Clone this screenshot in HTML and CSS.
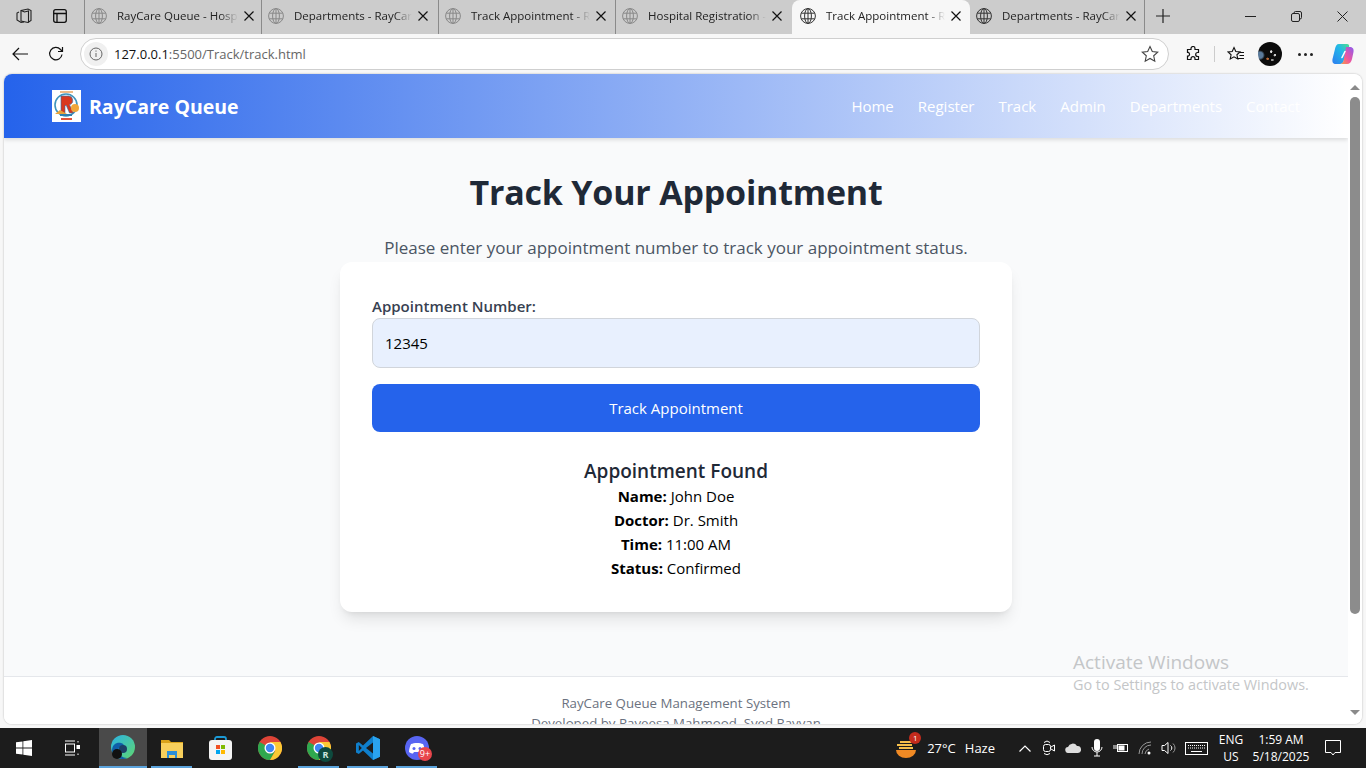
FILE: index.html
```html
<!DOCTYPE html>
<html lang="en">
<head>
  <meta charset="UTF-8">
  <title>Track Appointment - RayCare Queue</title>
  <link rel="stylesheet" href="styles.css">
</head>
<body>
  <svg width="0" height="0" class="defs">
    <symbol id="globe" viewBox="0 0 16 16"><g fill="none" stroke="currentColor" stroke-width="1"><circle cx="8" cy="8" r="7.4"/><ellipse cx="8" cy="8" rx="3.4" ry="7.4"/><path d="M8 .6v14.8M1.3 5.2h13.4M1.3 10.8h13.4"/></g></symbol>
    <symbol id="close" viewBox="0 0 10 10"><path d="M.5.5l9 9M9.5.5l-9 9" fill="none" stroke="currentColor" stroke-width="1.2"/></symbol>
    <symbol id="chrome" viewBox="0 0 24 24"><circle cx="12" cy="12" r="12" fill="#de4437"/><path d="M1.600 6 7 9l5 9 5.200-3-5.200 9A12 12 0 0 1 1.600 6z" fill="#2fa84f"/><path d="M12 6h10.400A12 12 0 0 1 12 24l5.200-9z" fill="#fcc934"/><circle cx="12" cy="12" r="5.500" fill="#fff"/><circle cx="12" cy="12" r="4.200" fill="#3f85f4"/></symbol>
  </svg>

  <!-- browser tabs -->
  <div class="tabbar">
    <div class="tab-tools">
      <svg width="18" height="18" viewBox="0 0 18 18" fill="none" stroke="#222" stroke-width="1.1"><path d="M6 3.500l7-1.500 3 1.500v10l-3 2-7-1.500z"/><path d="M6 3.500l3.500 1.500 4-1v11.500M4 5l-2 1v7l4 2.500 3-.5"/></svg>
      <svg width="16" height="16" viewBox="0 0 16 16" fill="none" stroke="#111" stroke-width="1.300"><rect x="1.700" y="1.700" width="12.600" height="12.600" rx="2"/><path d="M1.700 5.500h12.600M5 5.500v8.800"/></svg>
    </div>
    <div class="tab"><svg class="tab-globe"><use href="#globe"/></svg><span class="tab-title">RayCare Queue - Hosp</span><svg class="tab-close"><use href="#close"/></svg></div>
    <div class="tab"><svg class="tab-globe"><use href="#globe"/></svg><span class="tab-title">Departments - RayCar</span><svg class="tab-close"><use href="#close"/></svg></div>
    <div class="tab"><svg class="tab-globe"><use href="#globe"/></svg><span class="tab-title">Track Appointment - R</span><svg class="tab-close"><use href="#close"/></svg></div>
    <div class="tab"><svg class="tab-globe"><use href="#globe"/></svg><span class="tab-title">Hospital Registration -</span><svg class="tab-close"><use href="#close"/></svg></div>
    <div class="tab tab-active"><svg class="tab-globe"><use href="#globe"/></svg><span class="tab-title">Track Appointment - R</span><svg class="tab-close"><use href="#close"/></svg></div>
    <div class="tab tab-after-active"><svg class="tab-globe"><use href="#globe"/></svg><span class="tab-title">Departments - RayCar</span><svg class="tab-close"><use href="#close"/></svg></div>
    <svg class="tab-new" width="14" height="14" viewBox="0 0 14 14"><path d="M7 0v14M0 7h14" stroke="#222" stroke-width="1.200"/></svg>
    <div class="window-btns">
      <svg width="11" height="11" viewBox="0 0 11 11"><path d="M0 5.500h11" stroke="#222"/></svg>
      <svg width="11" height="11" viewBox="0 0 11 11" fill="none" stroke="#222"><rect x=".5" y="2.500" width="8" height="8" rx="1.500"/><path d="M3 2.500V2a1.500 1.500 0 0 1 1.500-1.500H9A1.500 1.500 0 0 1 10.500 2v4.500A1.500 1.500 0 0 1 9 8"/></svg>
      <svg width="11" height="11" viewBox="0 0 11 11"><path d="M.5.500l10 10M10.500.5l-10 10" stroke="#222"/></svg>
    </div>
  </div>

  <!-- address bar -->
  <div class="toolbar">
    <svg class="tool-back" width="16" height="14" viewBox="0 0 16 14" fill="none" stroke="#111" stroke-width="1.200"><path d="M16 7H1M7 1 1 7l6 6"/></svg>
    <svg class="tool-reload" width="16" height="16" viewBox="0 0 16 16" fill="none" stroke="#111" stroke-width="1.200"><path d="M14 8.500A6.200 6.200 0 1 1 12.500 3.500L14.500 5.500"/><path d="M14.500 1v4.500H10"/></svg>
    <div class="urlbar">
      <span class="url-info"><svg width="14" height="14" viewBox="0 0 14 14" fill="none" stroke="#666"><circle cx="7" cy="7" r="6"/><path d="M7 6v4M7 3.500v1.200"/></svg></span>
      <span class="url-text"><b>127.0.0.1</b>:5500/Track/track.html</span>
      <svg class="url-star" width="18" height="18" viewBox="0 0 18 18" fill="none" stroke="#444" stroke-width="1.100"><path d="M9 1.500l2.300 5 5.400.6-4 3.700 1.100 5.400L9 13.500l-4.800 2.700 1.100-5.400-4-3.700 5.400-.6z"/></svg>
    </div>
    <svg class="tool-ext" width="16" height="16" viewBox="0 0 16 16" fill="none" stroke="#111" stroke-width="1.200"><path d="M6 2.500a2 2 0 0 1 4 0V3.500h3.500v3h-.8a2 2 0 0 0 0 4h.8v3H10v-.8a2 2 0 0 0-4 0v.8H2.500v-3.300h.7a2 2 0 0 0 0-3.800h-.7V3.500H6z"/></svg>
    <span class="tool-sep"></span>
    <svg class="tool-fav" width="18" height="16" viewBox="0 0 18 16" fill="none" stroke="#111" stroke-width="1.100"><path d="M7 1.500l1.800 4 4.200.4-3.100 2.900.9 4.200L7 10.800l-3.800 2.200.9-4.200L1 5.900l4.200-.4zM12 6.500h5M12.500 9.500h4.500M10.500 12.500H17"/></svg>
    <span class="tool-avatar"></span>
    <span class="tool-more"><i></i><i></i><i></i></span>
    <svg class="tool-copilot" width="22" height="22" viewBox="0 0 22 22">
      <defs>
        <linearGradient id="cop-a" x1="0" y1="1" x2="1" y2="0"><stop offset="0" stop-color="#2f7df0"/><stop offset=".6" stop-color="#22b8e8"/><stop offset="1" stop-color="#4fe08c"/></linearGradient>
        <linearGradient id="cop-b" x1="1" y1="0" x2="0" y2="1"><stop offset="0" stop-color="#8a5cf0"/><stop offset=".55" stop-color="#f0559e"/><stop offset="1" stop-color="#f9a23a"/></linearGradient>
      </defs>
      <path d="M7 1h8c2 0 2.500 1.500 2 3l-5 13c-.7 2.500-2 4-4 4H4c-3 0-4-2-3.500-5L3 6c.6-3 1.500-5 4-5z" fill="url(#cop-a)"/>
      <path d="M14 4h4c3 0 4 2.500 3.500 5l-1.500 7c-.6 3-2.500 5-5 5H8c2 0 3-1.500 3.500-3z" fill="url(#cop-b)"/>
      <path d="M13 8.500 10 14.500" stroke="#fff" stroke-width="1.600" stroke-linecap="round"/>
    </svg>
  </div>

  <!-- page viewport -->
  <div class="viewport">
    <div class="page">
      <header class="site-header">
        <div class="brand">
          <svg class="brand-logo" width="29" height="32" viewBox="0 0 29 32">
            <rect width="29" height="32" fill="#fff"/>
            <circle cx="14" cy="15" r="11" fill="#fff" stroke="#3f94bd" stroke-width="1.600"/>
            <path d="M9 6h7.500a4.500 4.500 0 0 1 1 8.800L21.500 23h-4l-3.200-7.500H13V23H9z" fill="#d9381e" stroke="#2f6fa8" stroke-width=".6"/>
            <circle cx="23" cy="18" r="4" fill="#f0a63a"/>
            <path d="M3 24l5-4 7 4z" fill="#e8a33c"/>
            <path d="M8 24h12v2H8z" fill="#2f7fb0"/>
            <path d="M9 28h11v2H9z" fill="#e0533a"/>
            <path d="M8 1h13v2H8z" fill="#eebb88"/>
          </svg>
          <span class="brand-name">RayCare Queue</span>
        </div>
        <nav class="site-nav">
          <a href="#">Home</a>
          <a href="#">Register</a>
          <a href="#">Track</a>
          <a href="#">Admin</a>
          <a href="#">Departments</a>
          <a href="#">Contact</a>
        </nav>
      </header>

      <main class="track">
        <h1>Track Your Appointment</h1>
        <p class="lead">Please enter your appointment number to track your appointment status.</p>
        <form class="card">
          <label for="apptNumber">Appointment Number:</label>
          <input id="apptNumber" type="text" value="12345">
          <button type="button">Track Appointment</button>
          <div class="result">
            <h3>Appointment Found</h3>
            <p><strong>Name:</strong> John Doe</p>
            <p><strong>Doctor:</strong> Dr. Smith</p>
            <p><strong>Time:</strong> 11:00 AM</p>
            <p><strong>Status:</strong> Confirmed</p>
          </div>
        </form>
      </main>

      <footer class="site-footer">
        <p>RayCare Queue Management System</p>
        <p>Developed by Raveesa Mahmood, Syed Rayyan</p>
      </footer>
    </div>

    <div class="scrollbar">
      <span class="arrow-up"></span>
      <span class="thumb"></span>
      <span class="arrow-down"></span>
    </div>

    <div class="activate">
      <div class="activate-title">Activate Windows</div>
      <div class="activate-sub">Go to Settings to activate Windows.</div>
    </div>
  </div>

  <!-- windows taskbar -->
  <div class="taskbar">
    <span class="task-btn task-start"><svg width="16" height="16" viewBox="0 0 16 16" fill="#fff"><path d="M0 2.300l6.500-.9v6.200H0zM7.300 1.300L16 0v7.600H7.300zM0 8.400h6.500v6.200L0 13.700zM7.300 8.400H16V16l-8.700-1.300z"/></svg></span>
    <span class="task-btn task-view"><svg width="16" height="16" viewBox="0 0 16 16" fill="none" stroke="#fff"><path d="M1 1h10M1 15h10"/><rect x="1.500" y="4" width="9" height="8"/><path d="M14 1v1.500M14 13.500V15"/><rect x="13" y="5.500" width="2.500" height="3" fill="#fff"/></svg></span>
    <span class="task-btn task-app task-current">
      <svg width="24" height="24" viewBox="0 0 24 24">
        <defs>
          <linearGradient id="edge-a" x1="0" y1="0" x2="1" y2="1"><stop offset="0" stop-color="#2bb3e6"/><stop offset="1" stop-color="#5fd66f"/></linearGradient>
        </defs>
        <circle cx="12" cy="12" r="12" fill="url(#edge-a)"/>
        <path d="M1 16c0-7 5-9 9-8 3 .8 4 3 3 5-2-2-6-1-6 3 0 4 5 7 9 7-6 3-13-1-15-7z" fill="#0f5ea8"/>
        <circle cx="12" cy="14" r="4" fill="#1c3f66"/>
        <circle cx="6" cy="19" r="5" fill="#111"/>
      </svg>
    </span>
    <span class="task-btn task-app task-open">
      <svg width="22" height="20" viewBox="0 0 22 20"><path d="M0 2h8l2 2h12v4H0z" fill="#d9a21b"/><rect y="5" width="22" height="15" fill="#f7cf5c"/><path d="M6 13h10v7h-2v-3H8v3H6z" fill="#2b8fd8"/><rect x="8" y="17" width="6" height="3" fill="#f7cf5c"/></svg>
    </span>
    <span class="task-btn task-app">
      <svg width="23" height="24" viewBox="0 0 23 24"><path d="M6 6V3a2 2 0 0 1 2-2h7a2 2 0 0 1 2 2v3" fill="none" stroke="#1b9ad6" stroke-width="1.800"/><rect y="4" width="23" height="20" rx="3" fill="#f4f4f4"/><rect x="7" y="9" width="4" height="4" fill="#f25022"/><rect x="12" y="9" width="4" height="4" fill="#7fba00"/><rect x="7" y="14" width="4" height="4" fill="#00a4ef"/><rect x="12" y="14" width="4" height="4" fill="#ffb900"/></svg>
    </span>
    <span class="task-btn task-app">
      <svg width="24" height="24"><use href="#chrome"/></svg>
    </span>
    <span class="task-btn task-app task-open">
      <svg width="24" height="24"><use href="#chrome"/></svg>
      <span class="chrome-r">R</span>
    </span>
    <span class="task-btn task-app task-open">
      <svg width="24" height="24" viewBox="0 0 24 24"><path d="M17 0l7 3.200v17.600L17 24 7 14.500 2.800 18 0 16.500V7.500L2.800 6 7 9.500z" fill="#0f7fcc"/><path d="M17 0l7 3.200v17.600L17 24z" fill="#2aa3ef"/><path d="M17 6.500v11L10 12z" fill="#1c1c1c"/><path d="M2.800 9l3 3-3 3z" fill="#1c1c1c"/></svg>
    </span>
    <span class="task-btn task-app task-open">
      <svg width="24" height="24" viewBox="0 0 24 24"><circle cx="12" cy="12" r="12" fill="#5865f2"/><path d="M6 8c3-1.500 9-1.500 12 0 1 2 2 5 2 8-1.500 1-3 1.500-4 1.500l-1-1.500H9l-1 1.500C7 17.500 5.500 17 4 16c0-3 1-6 2-8z" fill="#fff"/><circle cx="9" cy="12.500" r="1.500" fill="#5865f2"/><circle cx="15" cy="12.500" r="1.500" fill="#5865f2"/></svg>
      <span class="discord-badge">9+</span>
    </span>

    <div class="tray">
      <span class="weather">
        <svg width="24" height="24" viewBox="0 0 24 24"><path d="M2 14h20a10 8 0 0 1-20 0z" fill="#f08a24"/><path d="M6 6h12M3 9h15M5 12h14" stroke="#f7c04a" stroke-width="2"/></svg>
        <span class="weather-badge">1</span>
      </span>
      <span class="weather-text">27°C</span>
      <span class="weather-text weather-haze">Haze</span>
      <div class="tray-icons">
        <span class="tray-slot"><svg width="12" height="7" viewBox="0 0 12 7" fill="none" stroke="#fff" stroke-width="1.200"><path d="M.5 6.500 6 1l5.500 5.500"/></svg></span>
        <span class="tray-slot"><svg width="12" height="16" viewBox="0 0 12 16" fill="none" stroke="#fff"><path d="M1 2.500Q4-.5 7 2.500M1 13.500q3 2.500 6 0"/><rect x=".5" y="4.500" width="7" height="7" rx="2"/><path d="M8 7l3.500-2v6L8 9"/></svg></span>
        <span class="tray-slot"><svg width="16" height="10" viewBox="0 0 16 10" fill="#ddd"><path d="M3.500 10a3 3 0 0 1-.5-6A5 5 0 0 1 12 3a3.500 3.500 0 0 1 1 7z"/></svg></span>
        <span class="tray-slot"><svg width="12" height="18" viewBox="0 0 12 18"><rect x="3" y="0" width="6" height="12" rx="3" fill="#fff"/><path d="M1 8a5 5 0 0 0 10 0M6 13v4M3 17h6" fill="none" stroke="#fff"/></svg></span>
        <span class="tray-slot"><svg width="16" height="12" viewBox="0 0 16 12" fill="none" stroke="#fff"><rect x="4.500" y="2.500" width="10" height="7"/><rect x="6" y="4" width="5" height="4" fill="#fff"/><path d="M0 6h4M1 3v2M3 3v2"/></svg></span>
        <span class="tray-slot"><svg width="14" height="14" viewBox="0 0 14 14" fill="none" stroke="#999"><path d="M1 13A12 12 0 0 1 13 1M4 13a9 9 0 0 1 9-9M7 13a6 6 0 0 1 4-5"/><circle cx="11" cy="12" r="1.500" fill="#fff" stroke="none"/></svg></span>
        <span class="tray-slot"><svg width="16" height="14" viewBox="0 0 16 14" fill="none" stroke="#fff"><path d="M1 4.500h2.500L7 1.500v11l-3.500-3H1z"/><path d="M9.500 4.500a3 3 0 0 1 0 5"/><path d="M12 2.500a6 6 0 0 1 0 9" stroke="#999"/></svg></span>
      </div>
      <svg class="tray-keyboard" width="23" height="13" viewBox="0 0 23 13" fill="none" stroke="#fff"><rect x=".5" y=".5" width="22" height="12"/><path d="M3 3.500h17M3 6h17" stroke-dasharray="1 1"/><path d="M6 9.500h11"/></svg>
      <span class="tray-lang">ENG<br>US</span>
      <span class="tray-clock">1:59 AM<br>5/18/2025</span>
      <svg class="tray-notify" width="16" height="16" viewBox="0 0 16 16" fill="none" stroke="#fff"><path d="M.5.500h15v12H10l-2 2.500L6 12.500H.5z"/></svg>
    </div>
  </div>
</body>
</html>
```

FILE: styles.css
```css
* {
  box-sizing: border-box;
}
html, body {
  margin: 0;
  height: 768px;
  overflow: hidden;
}
body {
  display: flex;
  flex-direction: column;
  font-family: "Open Sans", "Noto Sans", sans-serif;
  background: #f7f7f7;
}
.defs {
  position: absolute;
}

/* tabs */
.tabbar {
  display: flex;
  align-items: center;
  height: 34px;
  flex: none;
  background: #cccccc;
}
.tab-tools {
  display: flex;
  align-items: center;
  gap: 19px;
  width: 84px;
  margin-bottom: 2px;
  padding-left: 15px;
}
.tab {
  display: flex;
  align-items: center;
  width: 177px;
  height: 34px;
  padding: 0 11px 3px 6px;
  border-left: 1px solid #8a8a8a;
  border-image: linear-gradient(#8a8a8a, #8a8a8a) 1;
  font-size: 11.5px;
  color: #222;
}
.tab-active {
  width: 178px;
  background: #f7f7f7;
  border-left: 0;
  border-image: none;
  border-radius: 8px 8px 0 0;
  padding-left: 8px;
}
.tab-after-active {
  border-left: 0;
  border-right: 1px solid #8a8a8a;
  width: 175px;
}
.tab-globe {
  width: 16px;
  height: 16px;
  flex: none;
  color: #888;
}
.tab-active .tab-globe, .tab-after-active .tab-globe {
  color: #333;
}
.tab-title {
  flex: 1;
  margin: 0 6px 0 10px;
  white-space: nowrap;
  -webkit-mask-image: linear-gradient(90deg, #000 85%, transparent);
  mask-image: linear-gradient(90deg, #000 85%, transparent);
}
.tab-close {
  width: 10px;
  height: 10px;
  flex: none;
  color: #111;
}
.tab-new {
  margin: 0 0 2px 11px;
}
.window-btns {
  display: flex;
  align-items: center;
  gap: 35px;
  margin: 0 0 2px auto;
  padding-right: 18px;
}

/* toolbar */
.toolbar {
  display: flex;
  align-items: center;
  height: 40px;
  flex: none;
  background: #f7f7f7;
}
.tool-back {
  margin-left: 12px;
}
.tool-reload {
  margin-left: 20px;
}
.urlbar {
  display: flex;
  align-items: center;
  width: 1089px;
  height: 32px;
  margin-left: 16px;
  border: 1px solid #cfcfcf;
  border-radius: 16px;
  background: #fff;
}
.url-info {
  display: flex;
  align-items: center;
  justify-content: center;
  width: 24px;
  height: 24px;
  margin-left: 3px;
  border-radius: 12px;
  background: #f0f0f0;
}
.url-text {
  flex: 1;
  margin-left: 6px;
  font-size: 13px;
  color: #666;
}
.url-text b {
  font-weight: 400;
  color: #111;
}
.url-star {
  margin-right: 9px;
}
.tool-ext {
  margin-left: 16px;
}
.tool-sep {
  width: 1px;
  height: 16px;
  margin-left: 13px;
  background: #ccc;
}
.tool-fav {
  margin-left: 12px;
}
.tool-avatar {
  width: 24px;
  height: 24px;
  margin-left: 13px;
  border-radius: 50%;
  background:
    radial-gradient(circle at 55% 40%, #ddd 0 1px, transparent 1.5px),
    radial-gradient(circle at 70% 55%, #ccc 0 1px, transparent 1.5px),
    radial-gradient(circle at 40% 70%, #b86a3a 0 1px, transparent 1.5px),
    radial-gradient(circle at 60% 75%, #999 0 1px, transparent 1.5px),
    radial-gradient(circle at 8% 55%, #5a7a9a 0 3px, #0c0c0c 5px);
}
.tool-more {
  display: flex;
  gap: 3px;
  margin-left: 16px;
}
.tool-more i {
  width: 3px;
  height: 3px;
  border-radius: 50%;
  background: #222;
}
.tool-copilot {
  margin-left: 19px;
}

/* page */
.viewport {
  position: relative;
  display: flex;
  height: 650px;
  flex: none;
  margin: 0 4px;
  border-radius: 8px;
  overflow: hidden;
  background: #fff;
  box-shadow: 0 0 2px rgba(0, 0, 0, 0.3);
}
.page {
  display: flex;
  flex-direction: column;
  flex: 1;
  min-width: 0;
  background: #f9fafb;
}
.site-header {
  display: flex;
  align-items: center;
  justify-content: space-between;
  height: 64px;
  flex: none;
  padding: 0 48px;
  background: linear-gradient(90deg, #2563eb, #ffffff);
  box-shadow: 0 2px 4px rgba(0, 0, 0, 0.12);
}
.brand {
  display: flex;
  align-items: center;
  gap: 8px;
}
.brand-name {
  font-size: 19.5px;
  font-weight: 700;
  color: #fff;
}
.site-nav {
  display: flex;
  gap: 24px;
}
.site-nav a {
  font-size: 15px;
  font-weight: 500;
  color: #fff;
  text-decoration: none;
}
.track {
  display: flex;
  flex-direction: column;
  align-items: center;
  height: 538px;
  flex: none;
  padding-top: 32px;
}
.track h1 {
  margin: 0;
  font-size: 34px;
  line-height: 44px;
  font-weight: 700;
  letter-spacing: -0.2px;
  color: #1f2937;
}
.lead {
  margin: 20px 0 0;
  font-size: 17px;
  line-height: 28px;
  color: #4b5563;
}
.card {
  display: flex;
  flex-direction: column;
  width: 672px;
  height: 350px;
  padding: 32px;
  background: #fff;
  border-radius: 12px;
  box-shadow: 0 10px 15px -3px rgba(0, 0, 0, 0.1), 0 4px 6px -4px rgba(0, 0, 0, 0.1);
}
.card label {
  font-size: 15px;
  line-height: 24px;
  font-weight: 600;
  color: #374151;
}
.card input {
  height: 50px;
  padding: 0 12px;
  border: 1px solid #d1d5db;
  border-radius: 8px;
  background: #e8f0fe;
  font: inherit;
  font-size: 15px;
  color: #000;
}
.card button {
  height: 48px;
  margin-top: 16px;
  border: none;
  border-radius: 8px;
  background: #2563eb;
  font: inherit;
  font-size: 15px;
  color: #fff;
}
.result {
  margin-top: 26px;
  text-align: center;
}
.result h3 {
  margin: 0;
  font-size: 19px;
  line-height: 26px;
  font-weight: 600;
  color: #1f2937;
}
.result p {
  margin: 0;
  font-size: 15px;
  line-height: 24px;
  color: #000;
}
.site-footer {
  flex: 1;
  min-height: 0;
  padding-top: 16px;
  border-top: 1px solid #e5e7eb;
  background: #fff;
  text-align: center;
  font-size: 13.25px;
  line-height: 20px;
  color: #6b7280;
}
.site-footer p {
  margin: 0;
  white-space: nowrap;
}
.scrollbar {
  position: relative;
  width: 14px;
  flex: none;
  background: #fff;
}
.arrow-up, .arrow-down {
  position: absolute;
  left: 2px;
  width: 0;
  height: 0;
  border-left: 5px solid transparent;
  border-right: 5px solid transparent;
}
.arrow-up {
  top: 11px;
  border-bottom: 5px solid #8a8a8a;
}
.arrow-down {
  bottom: 9px;
  border-top: 5px solid #8a8a8a;
}
.thumb {
  position: absolute;
  top: 23px;
  left: 2px;
  width: 10px;
  height: 517px;
  border-radius: 5px;
  background: #8c8c8c;
}
.activate {
  position: absolute;
  left: 1069px;
  top: 576px;
  color: #c4c6c8;
  white-space: nowrap;
}
.activate-title {
  font-size: 19px;
  line-height: 24px;
}
.activate-sub {
  font-size: 14.4px;
  line-height: 22px;
}

/* taskbar */
.taskbar {
  display: flex;
  align-items: center;
  height: 40px;
  margin-top: 4px;
  flex: none;
  background: #1c1c1c;
  color: #fff;
}
.task-btn {
  position: relative;
  display: flex;
  align-items: center;
  justify-content: center;
  height: 40px;
  width: 49px;
}
.task-start {
  width: 48px;
}
.task-view {
  width: 51px;
  padding-right: 4px;
}
.task-current {
  width: 48px;
  background: #4a4a4a;
  border-bottom: 2px solid #5ba3dc;
}
.task-open::after {
  content: "";
  position: absolute;
  left: 4px;
  right: 4px;
  bottom: 0;
  height: 2px;
  background: #5ba3dc;
}
.chrome-r {
  position: absolute;
  left: 24px;
  top: 19px;
  width: 15px;
  height: 15px;
  border-radius: 50%;
  background: #0e4a3e;
  text-align: center;
  font-size: 9px;
  font-weight: 700;
  line-height: 15px;
  color: #cfe6dd;
}
.discord-badge {
  position: absolute;
  left: 26px;
  top: 19px;
  width: 14px;
  height: 14px;
  border-radius: 50%;
  background: #e8464c;
  text-align: center;
  font-size: 9px;
  line-height: 14px;
  color: #fff;
}
.tray {
  display: flex;
  align-items: center;
  margin-left: auto;
  font-size: 13px;
}
.weather {
  position: relative;
  display: flex;
  margin-right: 9px;
}
.weather-badge {
  position: absolute;
  right: -3px;
  top: -4px;
  width: 12px;
  height: 12px;
  border-radius: 50%;
  background: #c42b1c;
  text-align: center;
  font-size: 8px;
  line-height: 12px;
}
.weather-haze {
  margin-left: 9px;
}
.tray-icons {
  display: flex;
  align-items: center;
  margin-left: 18px;
}
.tray-slot {
  display: flex;
  align-items: center;
  justify-content: center;
  width: 24px;
}
.tray-keyboard {
  margin-left: 4px;
}
.tray-lang {
  width: 30px;
  margin-left: 8px;
  text-align: center;
  font-size: 12px;
  line-height: 17px;
}
.tray-clock {
  width: 70px;
  text-align: center;
  font-size: 12px;
  line-height: 17px;
}
.tray-notify {
  margin: 0 25px 0 9px;
}
```
